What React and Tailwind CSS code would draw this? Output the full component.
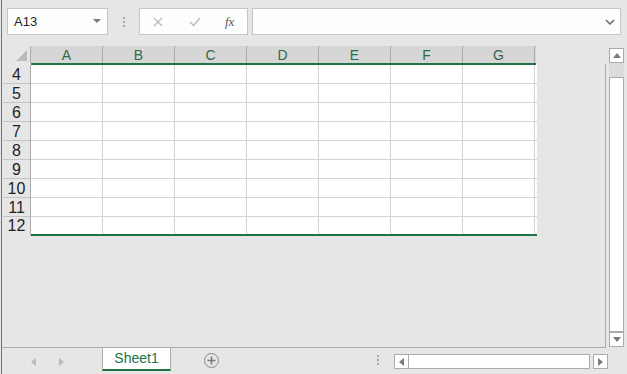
import React from "react";

const cols = ["A", "B", "C", "D", "E", "F", "G"];
const rows = [4, 5, 6, 7, 8, 9, 10, 11, 12];

const Dots = ({ className }) => (
  <div className={"flex flex-col gap-[2px] " + className}>
    <div className="w-[2px] h-[2px] bg-[#a8a8a8]" />
    <div className="w-[2px] h-[2px] bg-[#a8a8a8]" />
    <div className="w-[2px] h-[2px] bg-[#a8a8a8]" />
  </div>
);

const TopBar = () => (
  <div className="h-[46px] flex items-start pt-[8px]">
    <div className="ml-[5px] w-[101px] h-[27px] bg-[#fdfdfd] border border-[#c6c6c6] flex items-center justify-between pl-[6px] pr-[6px]">
      <span className="text-[13px] text-[#222]">A13</span>
      <svg width="8" height="5" viewBox="0 0 8 5">
        <path d="M0 0 L8 0 L4 4 Z" fill="#7a7a7a" />
      </svg>
    </div>
    <Dots className="ml-[15px] mt-[9px]" />
    <div className="ml-[14px] w-[109px] h-[27px] bg-[#fdfdfd] border border-[#c6c6c6] flex items-center">
      <svg className="ml-[13px]" width="10" height="10" viewBox="0 0 10 10">
        <path d="M1 1 L9 9 M9 1 L1 9" stroke="#b9b9b9" strokeWidth="1.3" />
      </svg>
      <svg className="ml-[26px]" width="12" height="10" viewBox="0 0 12 10">
        <path d="M1 5 L4.5 8.5 L11 1" stroke="#b9b9b9" strokeWidth="1.4" fill="none" />
      </svg>
      <span className="ml-[24px] text-[13px] italic text-[#555] font-['Liberation_Serif',serif]">fx</span>
    </div>
    <div className="ml-[4px] w-[369px] h-[27px] bg-[#fdfdfd] border border-[#c6c6c6] flex items-center justify-end pr-[5px]">
      <svg width="10" height="6" viewBox="0 0 10 6">
        <path d="M1 1 L5 5 L9 1" stroke="#6f6f6f" strokeWidth="1.6" fill="none" />
      </svg>
    </div>
  </div>
);

const Grid = () => (
  <div className="ml-px flex flex-col w-[534px]">
    <div className="flex h-[19px]">
      <div className="w-[28px] h-[17px] relative border-r border-[#ababab]">
        <svg className="absolute right-[3px] bottom-[2px]" width="11" height="11" viewBox="0 0 11 11">
          <path d="M11 0 L11 11 L0 11 Z" fill="#bcbcbc" />
        </svg>
      </div>
      <div className="flex border-b-2 border-[#217346] w-[505px]">
        {cols.map((c) => (
          <div
            key={c}
            className="w-[72px] h-[17px] bg-[#d6d6d6] border-r border-[#ababab] flex items-end justify-center text-[14px] leading-[15px] text-[#33684a]"
          >
            {c}
          </div>
        ))}
        <div className="w-px h-[17px] bg-[#d6d6d6]" />
      </div>
    </div>
    <div className="flex">
      <div className="w-[28px] flex flex-col border-r border-[#ababab]">
        {rows.map((r, i) => (
          <div
            key={r}
            className={
              "flex items-end justify-center text-[16px] leading-[17px] text-[#1e1e1e] " +
              (i < rows.length - 1 ? "h-[19px] border-b border-[#c4c4c4]" : "h-[17px]")
            }
          >
            {r}
          </div>
        ))}
      </div>
      <div className="flex flex-col w-[506px] border-b-2 border-[#217346] bg-white">
        {rows.map((r, i) => (
          <div
            key={r}
            className={
              "flex " + (i < rows.length - 1 ? "h-[19px] border-b border-[#d4d4d4]" : "h-[17px]")
            }
          >
            {cols.map((c) => (
              <div key={c} className="w-[72px] h-full border-r border-[#d4d4d4]" />
            ))}
          </div>
        ))}
      </div>
    </div>
  </div>
);

const Arrow = ({ dir }) => (
  <svg width="5" height="8" viewBox="0 0 5 8">
    {dir === "left" ? (
      <path d="M5 0 L5 8 L0 4 Z" fill="#7a7a7a" />
    ) : (
      <path d="M0 0 L0 8 L5 4 Z" fill="#7a7a7a" />
    )}
  </svg>
);

const App = () => {
  return (
    <div className="w-[627px] h-[374px] bg-[#e6e6e6] flex overflow-hidden font-['Liberation_Sans',Arial,sans-serif]">
      <div className="w-px" />
      <div className="w-px h-full bg-[#5f8069]" />
      <div className="flex-1 flex flex-col">
        <TopBar />
        <div className="flex h-[301px]">
          <div className="w-[603px]">
            <Grid />
          </div>
          <div className="w-px mt-[18px] bg-[#ababab]" />
          <div className="ml-[3px] w-[15px] flex flex-col">
            <div className="mt-[2px] h-[15px] bg-white border border-[#ababab] flex items-center justify-center">
              <svg width="8" height="5" viewBox="0 0 8 5">
                <path d="M0 5 L8 5 L4 0 Z" fill="#7a7a7a" />
              </svg>
            </div>
            <div className="h-[14px] bg-[#dcdcdc]" />
            <div className="h-[255px] bg-white border border-[#ababab]" />
            <div className="h-[15px] bg-white border border-[#ababab] flex items-center justify-center">
              <svg width="8" height="5" viewBox="0 0 8 5">
                <path d="M0 0 L8 0 L4 5 Z" fill="#7a7a7a" />
              </svg>
            </div>
          </div>
        </div>
        <div className="h-px w-[604px] bg-[#ababab]" />
        <div className="h-[26px] flex items-start">
          <div className="ml-[29px] mt-[10px] flex gap-[23px] opacity-40">
            <Arrow dir="left" />
            <Arrow dir="right" />
          </div>
          <div className="ml-[38px] w-[69px] h-[23px] bg-white border-x border-[#ababab] border-b-2 border-b-[#217346] flex items-center justify-center text-[14px] text-[#217346]">
            Sheet1
          </div>
          <div className="ml-[33px] mt-[5px] w-[15px] h-[15px] rounded-full border-[1.5px] border-[#8a8a8a] flex items-center justify-center">
            <svg width="9" height="9" viewBox="0 0 9 9">
              <path d="M4.5 0.5 L4.5 8.5 M0.5 4.5 L8.5 4.5" stroke="#7a7a7a" strokeWidth="1.5" />
            </svg>
          </div>
          <Dots className="ml-[158px] mt-[7px]" />
          <div className="ml-[15px] mt-[6px] flex h-[15px]">
            <div className="w-[15px] h-[15px] bg-white border border-[#ababab] flex items-center justify-center">
              <Arrow dir="left" />
            </div>
            <div className="w-[181px] h-[15px] bg-white border-y border-r border-[#ababab]" />
            <div className="ml-[3px] w-[15px] h-[15px] bg-white border border-[#ababab] flex items-center justify-center">
              <Arrow dir="right" />
            </div>
          </div>
        </div>
      </div>
    </div>
  );
};

export default App;
